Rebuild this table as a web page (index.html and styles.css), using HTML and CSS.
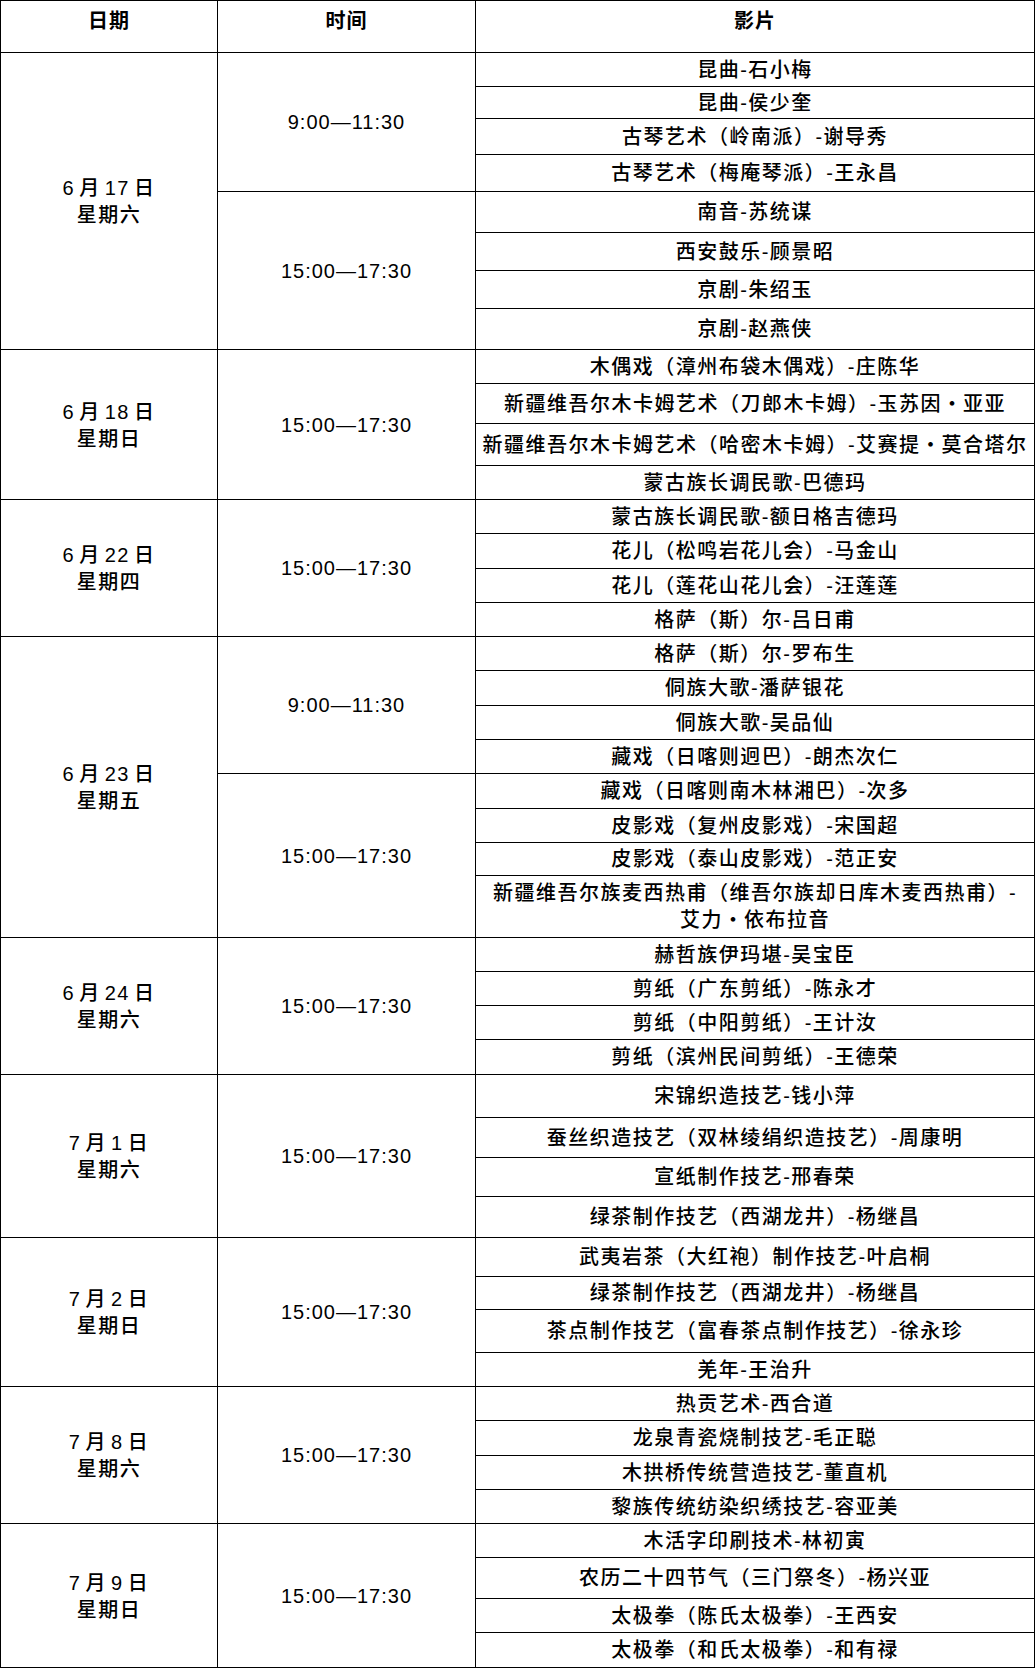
FILE: index.html
```html
<!DOCTYPE html>
<html lang="zh-CN">
<head>
<meta charset="utf-8">
<title>放映日程</title>
<link rel="stylesheet" href="styles.css">
</head>
<body>
<div class="schedule">
  <div class="cell head"><span>日期</span></div>
  <div class="cell head"><span>时间</span></div>
  <div class="cell head"><span>影片</span></div>

  <div class="cell date r8"><span>6 月 17 日<br>星期六</span></div>
  <div class="cell time r4"><span>9:00—11:30</span></div>
  <div class="cell film"><span>昆曲-石小梅</span></div>
  <div class="cell film"><span>昆曲-侯少奎</span></div>
  <div class="cell film"><span>古琴艺术（岭南派）-谢导秀</span></div>
  <div class="cell film"><span>古琴艺术（梅庵琴派）-王永昌</span></div>
  <div class="cell time r4"><span>15:00—17:30</span></div>
  <div class="cell film"><span>南音-苏统谋</span></div>
  <div class="cell film"><span>西安鼓乐-顾景昭</span></div>
  <div class="cell film"><span>京剧-朱绍玉</span></div>
  <div class="cell film"><span>京剧-赵燕侠</span></div>

  <div class="cell date r4"><span>6 月 18 日<br>星期日</span></div>
  <div class="cell time r4"><span>15:00—17:30</span></div>
  <div class="cell film"><span>木偶戏（漳州布袋木偶戏）-庄陈华</span></div>
  <div class="cell film"><span>新疆维吾尔木卡姆艺术（刀郎木卡姆）-玉苏因<span class="dot">·</span>亚亚</span></div>
  <div class="cell film"><span>新疆维吾尔木卡姆艺术（哈密木卡姆）-艾赛提<span class="dot">·</span>莫合塔尔</span></div>
  <div class="cell film"><span>蒙古族长调民歌-巴德玛</span></div>

  <div class="cell date r4"><span>6 月 22 日<br>星期四</span></div>
  <div class="cell time r4"><span>15:00—17:30</span></div>
  <div class="cell film"><span>蒙古族长调民歌-额日格吉德玛</span></div>
  <div class="cell film"><span>花儿（松鸣岩花儿会）-马金山</span></div>
  <div class="cell film"><span>花儿（莲花山花儿会）-汪莲莲</span></div>
  <div class="cell film"><span>格萨（斯）尔-吕日甫</span></div>

  <div class="cell date r8"><span>6 月 23 日<br>星期五</span></div>
  <div class="cell time r4"><span>9:00—11:30</span></div>
  <div class="cell film"><span>格萨（斯）尔-罗布生</span></div>
  <div class="cell film"><span>侗族大歌-潘萨银花</span></div>
  <div class="cell film"><span>侗族大歌-吴品仙</span></div>
  <div class="cell film"><span>藏戏（日喀则迥巴）-朗杰次仁</span></div>
  <div class="cell time r4"><span>15:00—17:30</span></div>
  <div class="cell film"><span>藏戏（日喀则南木林湘巴）-次多</span></div>
  <div class="cell film"><span>皮影戏（复州皮影戏）-宋国超</span></div>
  <div class="cell film"><span>皮影戏（泰山皮影戏）-范正安</span></div>
  <div class="cell film"><span>新疆维吾尔族麦西热甫（维吾尔族却日库木麦西热甫）-<br>艾力<span class="dot">·</span>依布拉音</span></div>

  <div class="cell date r4"><span>6 月 24 日<br>星期六</span></div>
  <div class="cell time r4"><span>15:00—17:30</span></div>
  <div class="cell film"><span>赫哲族伊玛堪-吴宝臣</span></div>
  <div class="cell film"><span>剪纸（广东剪纸）-陈永才</span></div>
  <div class="cell film"><span>剪纸（中阳剪纸）-王计汝</span></div>
  <div class="cell film"><span>剪纸（滨州民间剪纸）-王德荣</span></div>

  <div class="cell date r4"><span>7 月 1 日<br>星期六</span></div>
  <div class="cell time r4"><span>15:00—17:30</span></div>
  <div class="cell film"><span>宋锦织造技艺-钱小萍</span></div>
  <div class="cell film"><span>蚕丝织造技艺（双林绫绢织造技艺）-周康明</span></div>
  <div class="cell film"><span>宣纸制作技艺-邢春荣</span></div>
  <div class="cell film"><span>绿茶制作技艺（西湖龙井）-杨继昌</span></div>

  <div class="cell date r4"><span>7 月 2 日<br>星期日</span></div>
  <div class="cell time r4"><span>15:00—17:30</span></div>
  <div class="cell film"><span>武夷岩茶（大红袍）制作技艺-叶启桐</span></div>
  <div class="cell film"><span>绿茶制作技艺（西湖龙井）-杨继昌</span></div>
  <div class="cell film"><span>茶点制作技艺（富春茶点制作技艺）-徐永珍</span></div>
  <div class="cell film"><span>羌年-王治升</span></div>

  <div class="cell date r4"><span>7 月 8 日<br>星期六</span></div>
  <div class="cell time r4"><span>15:00—17:30</span></div>
  <div class="cell film"><span>热贡艺术-西合道</span></div>
  <div class="cell film"><span>龙泉青瓷烧制技艺-毛正聪</span></div>
  <div class="cell film"><span>木拱桥传统营造技艺-董直机</span></div>
  <div class="cell film"><span>黎族传统纺染织绣技艺-容亚美</span></div>

  <div class="cell date r4"><span>7 月 9 日<br>星期日</span></div>
  <div class="cell time r4"><span>15:00—17:30</span></div>
  <div class="cell film"><span>木活字印刷技术-林初寅</span></div>
  <div class="cell film"><span>农历二十四节气（三门祭冬）-杨兴亚</span></div>
  <div class="cell film"><span>太极拳（陈氏太极拳）-王西安</span></div>
  <div class="cell film"><span>太极拳（和氏太极拳）-和有禄</span></div>
</div>
</body>
</html>
```

FILE: styles.css
```css
html, body {
  margin: 0;
  padding: 0;
  background: #ffffff;
}

.schedule {
  display: grid;
  width: 1034px;
  grid-template-columns: 217px 258px 559px;
  grid-template-rows:
    52px 34px 32px 36px 37px 41px 38px 38px 41px
    34px 40px 42px 34px
    34px 35px 34px 34px
    34px 35px 34px 34px
    35px 34px 33px 62px
    34px 34px 34px 35px
    43px 40px 39px 41px
    39px 33px 43px 34px
    34px 35px 34px 34px
    34px 41px 34px 35px;
  border-top: 1px solid #000;
  border-left: 1px solid #000;
  font-family: "Liberation Sans", "Noto Sans CJK SC", sans-serif;
  font-size: 20px;
  font-weight: 500;
  color: #000;
}

.cell {
  box-sizing: border-box;
  border-right: 1px solid #000;
  border-bottom: 1px solid #000;
  display: flex;
  align-items: center;
  justify-content: center;
  text-align: center;
  line-height: 26px;
  letter-spacing: 1.5px;
}

.head {
  align-items: flex-start;
  padding-top: 7px;
  font-weight: bold;
  letter-spacing: 1px;
}

.date {
  grid-column: 1;
  line-height: 27px;
  word-spacing: -3px;
  padding-top: 2px;
}

.time {
  grid-column: 2;
  letter-spacing: 1px;
}

.film {
  grid-column: 3;
  padding: 0 4px;
}

.r4 {
  grid-row: span 4;
}

.r8 {
  grid-row: span 8;
}

.dot {
  display: inline-block;
  width: 21px;
  text-align: center;
  font-family: "Noto Sans CJK SC", sans-serif;
}
```
